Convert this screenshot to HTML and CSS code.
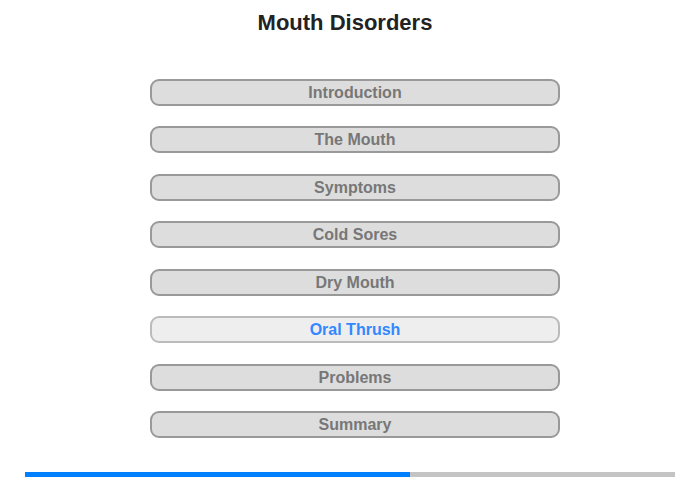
FILE: index.html
```
<!DOCTYPE html>
<html>
<head>
<meta charset="utf-8">
<link rel="stylesheet" href="styles.css">
</head>
<body>
<div class="page">
  <h1 class="title">Mouth Disorders</h1>
  <div class="menu">
    <div class="item">Introduction</div>
    <div class="item">The Mouth</div>
    <div class="item">Symptoms</div>
    <div class="item">Cold Sores</div>
    <div class="item">Dry Mouth</div>
    <div class="item active">Oral Thrush</div>
    <div class="item">Problems</div>
    <div class="item">Summary</div>
  </div>
  <div class="progress"><div class="progress-fill" style="width:385px"></div></div>
</div>
</body>
</html>
```
FILE: styles.css
```
html, body { margin: 0; padding: 0; background: #fff; }
.page {
  width: 700px;
  height: 480px;
  font-family: "Liberation Sans", Arial, sans-serif;
  display: flex;
  flex-direction: column;
}
.title {
  margin: 11px 0 0 0;
  width: 690px;
  font-size: 22px;
  line-height: 24px;
  font-weight: bold;
  color: #222;
  text-align: center;
}
.menu {
  margin: 44px 0 0 150px;
  display: flex;
  flex-direction: column;
  gap: 20.43px;
  width: 410px;
}
.item {
  box-sizing: border-box;
  height: 27px;
  border: 2px solid #999;
  border-radius: 9px;
  background: #dddddd;
  color: #777;
  font-size: 16px;
  font-weight: bold;
  line-height: 23px;
  text-align: center;
}
.item.active {
  background: #eeeeee;
  border-color: #bbbbbb;
  color: #3388ff;
}
.progress {
  margin: auto 0 3px 25px;
  width: 650px;
  height: 5px;
  background: #c4c4c4;
}
.progress-fill {
  height: 5px;
  background: #0080ff;
}
```
